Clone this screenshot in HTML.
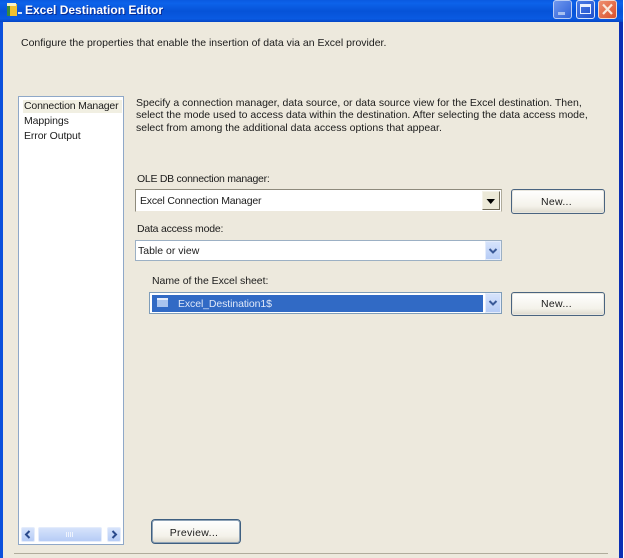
<!DOCTYPE html>
<html><head><meta charset="utf-8"><style>
html,body{margin:0;padding:0}
body{width:624px;height:558px;position:relative;overflow:hidden;background:#fff;font-family:"Liberation Sans",sans-serif;font-size:10.5px;color:#1c1c1c}
div{position:absolute;box-sizing:border-box}
.t{white-space:nowrap;line-height:13px}
.btn{border:1px solid #4a6480;border-radius:3px;background:linear-gradient(#fff,#f4f2ea 70%,#dcd8cc);text-align:center;color:#1c1c1c;box-shadow:inset 0 0 0 1px #e8e6de;letter-spacing:.3px}
.xp{background:linear-gradient(#d6e3fb,#b6ccf6);border:1px solid #e4ecfb}
#w{left:0;top:0;width:624px;height:558px;filter:blur(.35px)}
</style></head><body><div id="w">
<div style="left:0;top:0;width:623px;height:558px;background:#0c50dc"></div>
<div style="left:0;top:0;width:623px;height:22px;background:linear-gradient(#0a5ae0,#0c62ea 15%,#0653d8 50%,#0a5ae2 85%,#0445c4)"></div>
<div style="left:3px;top:22px;width:616px;height:536px;background:#ede9dd"></div>
<div style="left:619px;top:22px;width:4px;height:536px;background:#0b2fb4"></div>
<svg style="position:absolute;left:5px;top:2px" width="18" height="16" viewBox="0 0 18 16"><rect x="2" y="3" width="4" height="11" fill="#3a8a3a"/><rect x="5" y="2" width="7" height="12" fill="#f0c030"/><rect x="2" y="1" width="9" height="3" fill="#f6f0c8"/><rect x="13" y="10" width="4" height="2" fill="#cfe0f8"/></svg>
<div class="t" style="left:25px;top:3px;color:#fff;font-weight:bold;font-size:12px;line-height:15px;text-shadow:1px 1px 0 #0a2a90">Excel Destination Editor</div>
<div style="left:553px;top:0;width:19px;height:19px;background:linear-gradient(135deg,#6f97ee,#2f62d8);border:1px solid #b8ccf4;border-radius:3px"></div>
<div style="left:558px;top:12px;width:7px;height:3px;background:#a8c0f0"></div>
<div style="left:576px;top:0;width:19px;height:19px;background:linear-gradient(135deg,#4a7ce6,#1f50cc);border:1px solid #d8e4fa;border-radius:3px"></div>
<div style="left:580px;top:4px;width:11px;height:10px;border:1px solid #e8f0ff;border-top:3px solid #e8f0ff"></div>
<div style="left:598px;top:0;width:19px;height:19px;background:linear-gradient(135deg,#ee9070,#d8502c);border:1px solid #f2d8cc;border-radius:3px"></div>
<svg style="position:absolute;left:598px;top:0" width="19" height="19"><path d="M5 4.5L14 14M14 4.5L5 14" stroke="#f8e8dc" stroke-width="2.2"/></svg>

<div class="t" style="left:21px;top:37px;letter-spacing:0">Configure the properties that enable the insertion of data via an Excel provider.</div>

<div style="left:18px;top:96px;width:106px;height:449px;background:#fff;border:1px solid #8fa8c8"></div>
<div style="left:23px;top:100px;width:99px;height:13px;background:#f1efe2"></div>
<div class="t" style="left:24px;top:100px;letter-spacing:-.17px">Connection Manager</div>
<div class="t" style="left:24px;top:115px;letter-spacing:-.1px">Mappings</div>
<div class="t" style="left:24px;top:130px;letter-spacing:-.1px">Error Output</div>
<div class="xp" style="left:21px;top:527px;width:14px;height:15px;border-radius:2px"></div>
<div class="xp" style="left:38px;top:527px;width:64px;height:15px;border-radius:2px"></div>
<div class="xp" style="left:107px;top:527px;width:14px;height:15px;border-radius:2px"></div>
<svg style="position:absolute;left:21px;top:527px" width="100" height="15"><path d="M8.5 4L5 7.5L8.5 11M91.5 4L95 7.5L91.5 11" fill="none" stroke="#2b4a8c" stroke-width="2"/><path d="M45.5 5v5M47.5 5v5M49.5 5v5M51.5 5v5" stroke="#eef3fd"/></svg>

<div class="t" style="left:136px;top:97px">Specify a connection manager, data source, or data source view for the Excel destination. Then,</div>
<div class="t" style="left:136px;top:109px">select the mode used to access data within the destination. After selecting the data access mode,</div>
<div class="t" style="left:136px;top:122px">select from among the additional data access options that appear.</div>

<div class="t" style="left:137px;top:173px;letter-spacing:-.27px">OLE DB connection manager:</div>
<div style="left:135px;top:189px;width:367px;height:23px;background:#fff;border:1px solid;border-color:#8e8a7c #b0ac9c #ede9dd #8e8a7c"></div>
<div class="t" style="left:140px;top:195px;letter-spacing:-.2px">Excel Connection Manager</div>
<div style="left:482px;top:191px;width:18px;height:19px;background:#ece9d8;border:1px solid;border-color:#f4f2e8 #6f6a58 #6f6a58 #f4f2e8"></div>
<svg style="position:absolute;left:482px;top:191px" width="18" height="19"><path d="M4.5 8H13L8.75 13Z" fill="#000"/></svg>
<div class="btn t" style="left:511px;top:189px;width:94px;height:25px;line-height:24px;padding-right:3px">New...</div>

<div class="t" style="left:137px;top:223px;letter-spacing:-.22px">Data access mode:</div>
<div style="left:135px;top:240px;width:367px;height:21px;background:#fff;border:1px solid #9cb0c4"></div>
<div class="t" style="left:138px;top:245px">Table or view</div>
<div class="xp" style="left:485px;top:241px;width:16px;height:19px"></div>
<svg style="position:absolute;left:485px;top:241px" width="16" height="19"><path d="M4.5 8L8 11.5L11.5 8" fill="none" stroke="#3a5a98" stroke-width="2"/></svg>

<div class="t" style="left:152px;top:275px;letter-spacing:-.04px">Name of the Excel sheet:</div>
<div style="left:149px;top:292px;width:353px;height:22px;background:#fff;border:1px solid #7f9db9"></div>
<div style="left:152px;top:295px;width:331px;height:17px;background:#316ac5"></div>
<div style="left:157px;top:298px;width:11px;height:9px;background:#a9c4ee;border-top:2px solid #e4ecfa"></div>
<div class="t" style="left:178px;top:298px;color:#dfe8f8;letter-spacing:-.1px">Excel_Destination1$</div>
<div class="xp" style="left:485px;top:293px;width:16px;height:20px"></div>
<svg style="position:absolute;left:485px;top:293px" width="16" height="20"><path d="M4.5 8L8 11.5L11.5 8" fill="none" stroke="#3a5a98" stroke-width="2"/></svg>
<div class="btn t" style="left:511px;top:292px;width:94px;height:24px;line-height:23px;padding-right:3px">New...</div>

<div class="btn t" style="left:151px;top:519px;width:90px;height:25px;line-height:26px;border-width:1px;border-color:#3f5f80;border-radius:4px;box-shadow:inset 0 0 0 1px #8ea2b6;padding-right:4px">Preview...</div>
<div style="left:14px;top:553px;width:594px;height:1px;background:#b0ac9c"></div>
</div></body></html>
